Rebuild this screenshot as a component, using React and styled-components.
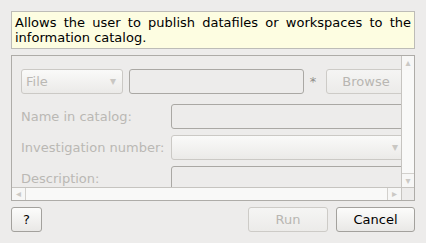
import styled, { createGlobalStyle } from "styled-components"

const GlobalStyle = createGlobalStyle`
    html, body {
        margin: 0;
        padding: 0;
        background: #edeceb;
    }
    body {
        font-family: "DejaVu Sans", "Liberation Sans", sans-serif;
        font-size: 13px;
    }
`

const App = () => {
    return (
        <Dialog>
            <GlobalStyle />
            <Info>
                Allows the user to publish datafiles or workspaces to the information catalog.
            </Info>
            <ScrollArea>
                <Viewport>
                    <Content>
                        <FileRow>
                            <Combo $width={102}>File<Arrow>▾</Arrow></Combo>
                            <Entry $width={175} />
                            <Star>*</Star>
                            <Button disabled $width={80}>Browse</Button>
                        </FileRow>
                        <Label>Name in catalog:</Label>
                        <Entry $width={234} />
                        <Label>Investigation number:</Label>
                        <Combo $width={234}><Arrow>▾</Arrow></Combo>
                        <Label>Description:</Label>
                        <Entry $width={234} />
                    </Content>
                </Viewport>
                <VBar>
                    <BarButton>▴</BarButton>
                    <Track />
                    <BarButton $bottom>▾</BarButton>
                </VBar>
                <HBar>
                    <BarButton $side>◂</BarButton>
                    <Track />
                    <BarButton $side $right>▸</BarButton>
                </HBar>
                <Corner />
            </ScrollArea>
            <Footer>
                <Button $width={31}>?</Button>
                <Spacer />
                <Button disabled $width={80}>Run</Button>
                <Button $width={79}>Cancel</Button>
            </Footer>
        </Dialog>
    )
}
export default App

const Dialog = styled.div`
    width: 426px;
    height: 243px;
    box-sizing: border-box;
    padding: 11px 11px 0 11px;
    display: flex;
    flex-direction: column;
`
const Info = styled.div`
    background: #fdfde1;
    border: 1px solid #bdbcb7;
    padding: 3px 3px 3px 3px;
    line-height: 15px;
    color: #000;
    text-align: justify;
`
const ScrollArea = styled.div`
    margin-top: 6px;
    height: 146px;
    box-sizing: border-box;
    border: 1px solid #aeaca8;
    display: grid;
    grid-template-columns: 1fr 13px;
    grid-template-rows: 1fr 13px;
`
const Viewport = styled.div`
    overflow: hidden;
    position: relative;
`
const Content = styled.div`
    width: 420px;
    padding: 13px 0 0 9px;
    display: grid;
    grid-template-columns: 150px 234px;
    row-gap: 6px;
    align-items: center;
`
const FileRow = styled.div`
    grid-column: 1 / span 2;
    display: flex;
    align-items: center;
    margin-bottom: 4px;
`
const Label = styled.div`
    color: #bab8b4;
`
const Entry = styled.div`
    width: ${p => p.$width}px;
    height: 25px;
    flex-shrink: 0;
    box-sizing: border-box;
    border: 1px solid #aaa8a4;
    border-radius: 3px;
    background: #edeceb;
`
const Combo = styled.div`
    width: ${p => p.$width}px;
    height: 25px;
    flex-shrink: 0;
    box-sizing: border-box;
    border: 1px solid #cbc9c5;
    border-radius: 3px;
    background: linear-gradient(#fafaf9, #ebeae8);
    color: #bab8b4;
    display: flex;
    align-items: center;
    padding: 0 0 0 4px;
    margin-right: 6px;
    position: relative;
`
const Arrow = styled.span`
    position: absolute;
    right: 6px;
    top: 4px;
    font-size: 12px;
    color: #c9c7c3;
`
const Star = styled.span`
    color: #8f8d89;
    width: 12px;
    flex-shrink: 0;
    margin: 0 7px 0 3px;
    text-align: center;
`
const Button = styled.button`
    width: ${p => p.$width}px;
    height: 25px;
    flex-shrink: 0;
    box-sizing: border-box;
    border: 1px solid ${p => p.disabled ? "#cdcbc7" : "#a3a19d"};
    border-radius: 3px;
    background: ${p => p.disabled ? "linear-gradient(#f5f5f4, #ecebe9)" : "linear-gradient(#fcfcfb, #e9e8e6)"};
    color: ${p => p.disabled ? "#b8b6b2" : "#000"};
    font-family: "DejaVu Sans", "Liberation Sans", sans-serif;
    font-size: 13px;
    padding: 0;
`
const VBar = styled.div`
    border-left: 1px solid #c6c4c0;
    display: flex;
    flex-direction: column;
    background: #f7f7f6;
`
const HBar = styled.div`
    border-top: 1px solid #c6c4c0;
    display: flex;
    background: #f7f7f6;
`
const BarButton = styled.div`
    ${p => p.$side ? "width: 14px;" : "height: 14px;"}
    flex-shrink: 0;
    box-sizing: border-box;
    color: #cbc9c5;
    font-size: 10px;
    line-height: 12px;
    display: flex;
    align-items: center;
    justify-content: center;
    ${p => p.$bottom && "border-top: 1px solid #d2d0cc;"}
    ${p => p.$side && !p.$right && "border-right: 1px solid #d2d0cc;"}
    ${p => p.$right && "border-left: 1px solid #d2d0cc;"}
`
const Track = styled.div`
    flex: 1;
    background: #f9f9f8;
`
const Corner = styled.div`
    background: #edeceb;
    border-top: 1px solid #c6c4c0;
    border-left: 1px solid #c6c4c0;
`
const Footer = styled.div`
    margin-top: 6px;
    display: flex;
    gap: 8px;
`
const Spacer = styled.div`
    flex: 1;
`
